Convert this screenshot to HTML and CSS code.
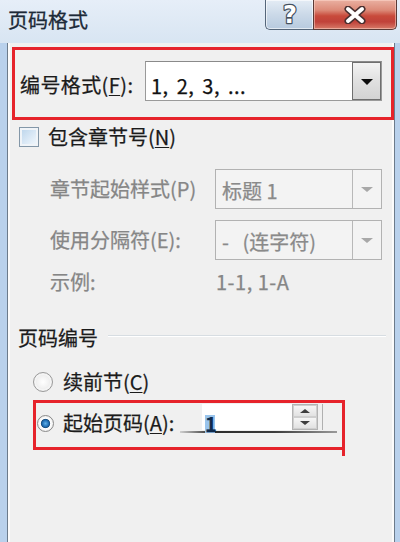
FILE: index.html
```html
<!DOCTYPE html>
<html lang="zh-CN">
<head>
<meta charset="utf-8">
<title>页码格式</title>
<link rel="stylesheet" href="styles.css">
</head>
<body>
<div class="window">
  <div class="titlebar">
    <div class="title">页码格式</div>
    <div class="caption-buttons">
      <div class="cbtn help">
        <svg width="24" height="26" viewBox="0 0 24 26"><text x="12" y="21" text-anchor="middle" class="help-glyph">?</text></svg>
      </div>
      <div class="cbtn close">
        <svg width="26" height="18" viewBox="0 0 26 18">
          <path d="M6 3 L20 15 M20 3 L6 15" class="x-out"/>
          <path d="M6 3 L20 15 M20 3 L6 15" class="x-in"/>
        </svg>
      </div>
    </div>
  </div>
  <div class="frame">
    <div class="client">
      <div class="redbox format-box">
        <div class="lbl format-lbl">编号格式(<u>F</u>):</div>
        <div class="combo">
          <div class="combo-text">1, 2, 3, ...</div>
          <div class="combo-btn"><span class="tri"></span></div>
        </div>
      </div>

      <div class="check-row">
        <span class="checkbox"></span>
        <span class="lbl">包含章节号(<u>N</u>)</span>
      </div>

      <div class="chapter-grid">
        <div class="dlbl">章节起始样式(P)</div>
        <div class="dcombo">
          <div class="dcombo-text">标题 1</div>
          <div class="dcombo-btn"><span class="dtri"></span></div>
        </div>
        <div class="dlbl">使用分隔符(E):</div>
        <div class="dcombo">
          <div class="dcombo-text pre">-   (连字符)</div>
          <div class="dcombo-btn"><span class="dtri"></span></div>
        </div>
        <div class="dlbl">示例:</div>
        <div class="dlbl example">1-1, 1-A</div>
      </div>

      <div class="section-head">
        <span class="lbl">页码编号</span>
        <span class="etched"></span>
      </div>

      <div class="radio-row">
        <span class="radio"></span>
        <span class="lbl">续前节(<u>C</u>)</span>
      </div>

      <div class="redbox start-box">
        <div class="start-row">
          <span class="radio checked"></span>
          <span class="lbl start-lbl">起始页码(<u>A</u>):</span>
          <div class="spinner">
            <div class="spin-input"><span class="sel">1</span></div>
            <div class="spin-btns">
              <div class="spin-btn"><span class="up"></span></div>
              <div class="spin-btn"><span class="down"></span></div>
            </div>
            <div class="spin-edge"></div>
          </div>
        </div>
        <div class="under-line"></div>
      </div>
    </div>
  </div>
</div>
</body>
</html>
```
FILE: styles.css
```css
* { box-sizing: border-box; }
html, body {
  margin: 0;
  padding: 0;
}
body {
  width: 400px;
  height: 542px;
  overflow: hidden;
  font-family: "Noto Sans CJK SC", "Noto Sans", sans-serif;
  color: #1b1b1b;
  background: #b9d1ec;
}
.window {
  width: 400px;
  height: 542px;
  display: flex;
  flex-direction: column;
}
.titlebar {
  height: 43px;
  flex: none;
  display: flex;
  align-items: flex-start;
  background: linear-gradient(to bottom, #e6eef8, #d8e5f2);
}
.title {
  padding: 8px 0 0 8px;
  font-size: 20px;
  line-height: 24px;
  color: #1d2a38;
  -webkit-text-stroke: 0.3px #1d2a38;
}
.caption-buttons {
  margin-left: auto;
  margin-right: 3px;
  display: flex;
}
.cbtn {
  height: 30px;
  border: 1px solid #55667a;
  border-top: none;
  display: flex;
  align-items: center;
  justify-content: center;
}
.help {
  width: 48px;
  border-radius: 0 0 0 5px;
  border-right: none;
  background: linear-gradient(to bottom, #e4ecf5 0%, #cbd9e8 50%, #b7cadf 100%);
  box-shadow: inset 0 0 0 1px rgba(255,255,255,0.6);
}
.help-glyph {
  font-family: "DejaVu Sans", "Liberation Sans", sans-serif;
  font-weight: 700;
  font-size: 24px;
  fill: #ffffff;
  stroke: #44505e;
  stroke-width: 2.4px;
  stroke-linejoin: round;
  paint-order: stroke fill;
}
.close {
  width: 84px;
  border-radius: 0 0 5px 0;
  border-color: #5a3a36;
  background: linear-gradient(to bottom, #eab0a1 0%, #dc8a78 35%, #c84a3b 55%, #c0423a 75%, #d77a68 100%);
  box-shadow: inset 0 0 0 1px rgba(255,220,210,0.5);
}
.x-out {
  stroke: #4a3030;
  stroke-width: 7px;
  stroke-linecap: round;
  fill: none;
}
.x-in {
  stroke: #ffffff;
  stroke-width: 4px;
  stroke-linecap: round;
  fill: none;
}

.frame {
  flex: 1;
  display: flex;
}
.client {
  flex: 1;
  margin: 0 8px 0 7px;
  border-left: 1px solid #6c7b8b;
  border-right: 1px solid #6c7b8b;
  background: #f0f0f0;
  box-shadow: inset 2px 0 #fbfbfb, inset -2px 0 #fbfbfb;
  overflow: visible;
  font-size: 20px;
  -webkit-text-stroke: 0.25px currentColor;
}
.lbl {
  font-size: 20px;
  line-height: 22px;
  white-space: nowrap;
}
u { text-decoration-thickness: 1px; text-underline-offset: 2px; }

.redbox {
  border: 3px solid #e6232b;
  position: relative;
}
.format-box {
  margin: 4px 0 0 4px;
  width: 382px;
  height: 73px;
  display: flex;
  align-items: flex-start;
  padding-left: 5px;
}
.format-lbl {
  width: 125px;
  flex: none;
  margin-top: 24px;
  letter-spacing: 0.4px;
}
.combo {
  margin-top: 11px;
  width: 237px;
  height: 40px;
  border: 1px solid #9a9a9a;
  border-top-color: #8a8a8a;
  background: #ffffff;
  display: flex;
}
.combo-text {
  flex: 1;
  padding: 12px 0 0 5px;
  font-size: 20px;
  line-height: 24px;
  color: #111;
  word-spacing: 3px;
  letter-spacing: 0.5px;
}
.combo-btn {
  width: 29px;
  flex: none;
  border: 1px solid #6f6f6f;
  background: linear-gradient(to bottom, #f3f3f3, #e0e0e0 50%, #d3d3d3);
  display: flex;
  align-items: center;
  justify-content: center;
  padding-top: 2px;
}
.tri {
  width: 0;
  height: 0;
  border-left: 6px solid transparent;
  border-right: 6px solid transparent;
  border-top: 6px solid #0d0d0d;
}

.check-row {
  margin: 7px 0 0 11px;
  display: flex;
  align-items: center;
  gap: 9px;
  height: 20px;
}
.checkbox {
  width: 20px;
  height: 20px;
  flex: none;
  border: 1px solid #8397a8;
  background: linear-gradient(135deg, #b9d3ea, #e4eff9 70%, #f4f8fc);
  box-shadow: inset 0 0 0 2px #f0f4f8;
}

.chapter-grid {
  margin: 22px 0 0 42px;
  display: grid;
  grid-template-columns: 165px 167px;
  grid-template-rows: 40px 40px 22px;
  row-gap: 11px;
}
.dlbl {
  align-self: center;
  font-size: 20px;
  line-height: 22px;
  color: #868686;
  white-space: nowrap;
}
.example { padding-left: 1px; letter-spacing: 0.5px; }
.dcombo {
  border: 1px solid #b2b2b2;
  background: #f3f3f3;
  display: flex;
}
.dcombo-text {
  flex: 1;
  display: flex;
  align-items: center;
  padding: 2px 0 0 6px;
  font-size: 20px;
  color: #8a8a8a;
}
.pre { white-space: pre; }
.dcombo-btn {
  width: 29px;
  flex: none;
  border-left: 1px solid #b8b8b8;
  display: flex;
  align-items: center;
  justify-content: center;
}
.dtri {
  width: 0;
  height: 0;
  border-left: 6px solid transparent;
  border-right: 6px solid transparent;
  border-top: 5px solid #a8a8a8;
}

.section-head {
  margin: 33px 8px 0 10px;
  display: flex;
  height: 24px;
  align-items: center;
}
.etched {
  flex: 1;
  align-self: flex-start;
  margin: 9px 0 0 10px;
  border-top: 1px solid #d7dde2;
  border-bottom: 1px solid #ffffff;
}

.radio-row {
  margin: 21px 0 0 25px;
  height: 22px;
  display: flex;
  align-items: center;
  gap: 10px;
}
.radio {
  width: 20px;
  height: 20px;
  flex: none;
  border-radius: 50%;
  border: 1px solid #9a9a9a;
  background: radial-gradient(circle at 50% 50%, #ffffff 0%, #f2f2f2 45%, #d9d9d9 100%);
  box-shadow: inset 0 0 0 2px #f4f4f4;
}

.start-box {
  margin: 7px 0 0 25px;
  width: 312px;
  height: 50px;
}
.start-box::after {
  content: "";
  position: absolute;
  right: -3px;
  bottom: -9px;
  width: 3px;
  height: 6px;
  background: #e6232b;
}
.start-row {
  height: 28px;
  display: flex;
  align-items: flex-start;
}
.radio.checked {
  width: 17px;
  height: 17px;
  margin: 12px 0 0 1px;
  border: 1px solid #8a8a8a;
  background: radial-gradient(circle at 50% 50%, #5fb0ea 0%, #1f6db3 30%, #1a4f80 40%, #ffffff 48%, #ececec 75%, #d0d0d0 100%);
  box-shadow: none;
}
.start-lbl {
  width: 139px;
  flex: none;
  margin: 9px 0 0 9px;
}
.spinner {
  margin-top: 1px;
  display: flex;
  height: 26px;
}
.spin-input {
  width: 90px;
  background: #ffffff;
  padding: 5px 0 0 3px;
}
.sel {
  display: inline-block;
  width: 10px;
  height: 18px;
  background: #99c4ec;
  color: #0e2a4d;
  font-size: 20px;
  line-height: 18px;
  font-weight: bold;
  text-align: center;
}
.spin-btns {
  width: 26px;
  display: flex;
  flex-direction: column;
  border: 1px solid #b3b3b3;
}
.spin-btn {
  flex: 1;
  display: flex;
  align-items: center;
  justify-content: center;
  background: linear-gradient(to bottom, #f6f6f6, #e2e2e2);
  border: 1px solid #cfcfcf;
}
.up {
  border-left: 5px solid transparent;
  border-right: 5px solid transparent;
  border-bottom: 4px solid #3d3d3d;
}
.down {
  border-left: 5px solid transparent;
  border-right: 5px solid transparent;
  border-top: 4px solid #3d3d3d;
}
.spin-edge {
  width: 1px;
  margin-left: 4px;
  background: #b0b0b0;
}
.under-line {
  margin-left: 144px;
  width: 157px;
  height: 2px;
  background: linear-gradient(to right, #d0d0d0, #2b2b2b 20%, #3a3a3a 60%, #9a9a9a);
}
```
